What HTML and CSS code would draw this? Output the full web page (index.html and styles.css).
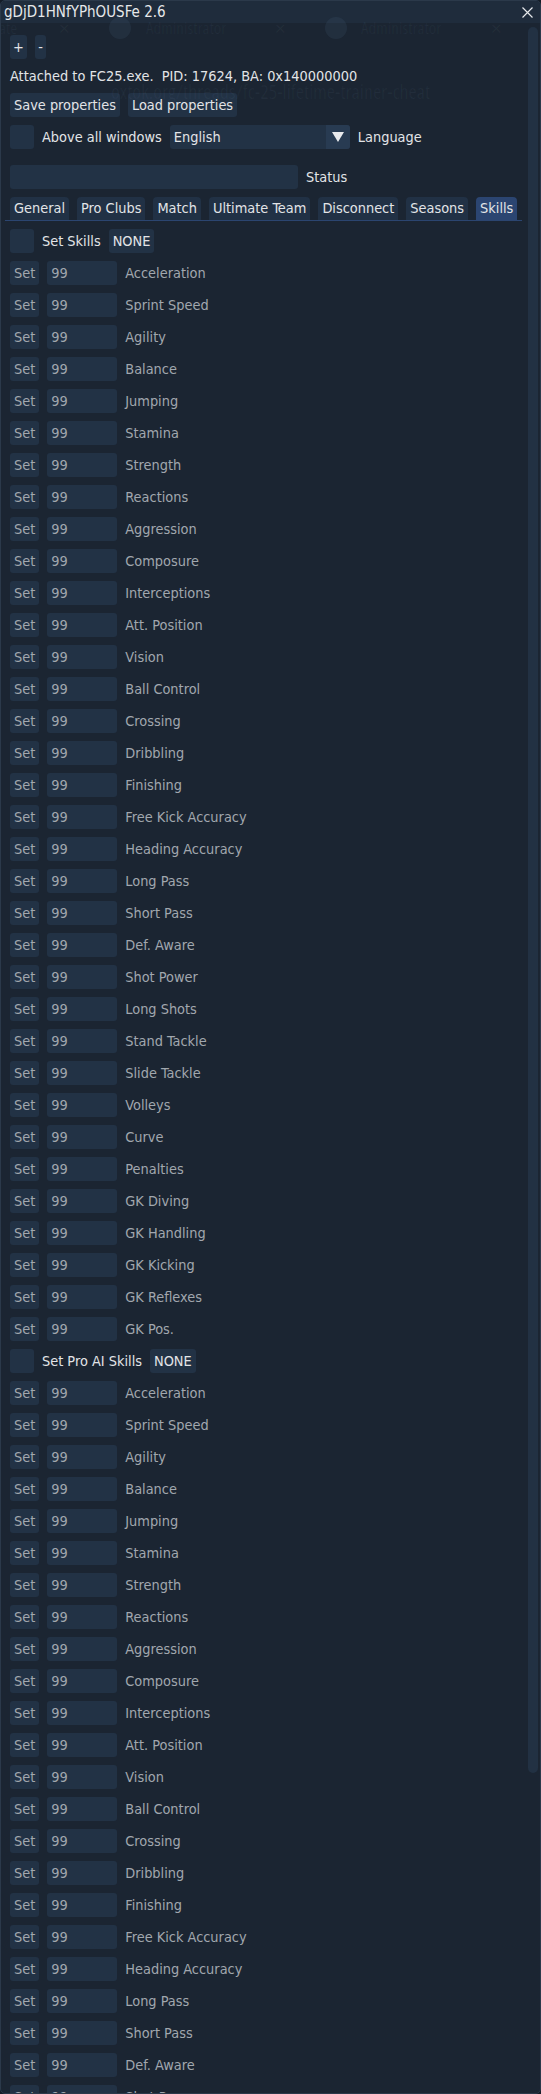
FILE: index.html
```html
<!DOCTYPE html>
<html>
<head>
<meta charset="utf-8">
<link rel="stylesheet" href="styles.css">
</head>
<body>
<div class="window">
  <div class="titlebar">
    <span class="title">gDjD1HNfYPhOUSFe 2.6</span>
    <svg class="close" width="11" height="11" viewBox="0 0 11 11"><path d="M0.5 0.5 L10.5 10.5 M10.5 0.5 L0.5 10.5" stroke="#e6e8eb" stroke-width="1.2"/></svg>
  </div>
  <div class="body">
    <div class="content">
      <div class="row">
        <span class="btn plus">+</span>
        <span class="btn minus">-</span>
      </div>
      <div class="text">Attached to FC25.exe.&nbsp; PID: 17624, BA: 0x140000000</div>
      <div class="row">
        <span class="btn">Save properties</span>
        <span class="btn">Load properties</span>
      </div>
      <div class="row">
        <span class="check"></span>
        <span class="label">Above all windows</span>
        <span class="combo"><span class="combo-text">English</span><span class="combo-arrow"><svg width="12" height="10" viewBox="0 0 12 10"><path d="M0 0 H12 L6 10 Z" fill="#e8eaed"/></svg></span></span>
        <span class="label">Language</span>
      </div>
      <div class="row status-row">
        <span class="field status"></span>
        <span class="label">Status</span>
      </div>
      <div class="tabbar">
        <span class="tab">General</span>
        <span class="tab">Pro Clubs</span>
        <span class="tab">Match</span>
        <span class="tab">Ultimate Team</span>
        <span class="tab">Disconnect</span>
        <span class="tab">Seasons</span>
        <span class="tab active">Skills</span>
      </div>
      <div class="row">
        <span class="check"></span>
        <span class="label">Set Skills</span>
        <span class="btn">NONE</span>
      </div>
      <div class="row skill"><span class="btn dim">Set</span><span class="field num">99</span><span class="name">Acceleration</span></div>
      <div class="row skill"><span class="btn dim">Set</span><span class="field num">99</span><span class="name">Sprint Speed</span></div>
      <div class="row skill"><span class="btn dim">Set</span><span class="field num">99</span><span class="name">Agility</span></div>
      <div class="row skill"><span class="btn dim">Set</span><span class="field num">99</span><span class="name">Balance</span></div>
      <div class="row skill"><span class="btn dim">Set</span><span class="field num">99</span><span class="name">Jumping</span></div>
      <div class="row skill"><span class="btn dim">Set</span><span class="field num">99</span><span class="name">Stamina</span></div>
      <div class="row skill"><span class="btn dim">Set</span><span class="field num">99</span><span class="name">Strength</span></div>
      <div class="row skill"><span class="btn dim">Set</span><span class="field num">99</span><span class="name">Reactions</span></div>
      <div class="row skill"><span class="btn dim">Set</span><span class="field num">99</span><span class="name">Aggression</span></div>
      <div class="row skill"><span class="btn dim">Set</span><span class="field num">99</span><span class="name">Composure</span></div>
      <div class="row skill"><span class="btn dim">Set</span><span class="field num">99</span><span class="name">Interceptions</span></div>
      <div class="row skill"><span class="btn dim">Set</span><span class="field num">99</span><span class="name">Att. Position</span></div>
      <div class="row skill"><span class="btn dim">Set</span><span class="field num">99</span><span class="name">Vision</span></div>
      <div class="row skill"><span class="btn dim">Set</span><span class="field num">99</span><span class="name">Ball Control</span></div>
      <div class="row skill"><span class="btn dim">Set</span><span class="field num">99</span><span class="name">Crossing</span></div>
      <div class="row skill"><span class="btn dim">Set</span><span class="field num">99</span><span class="name">Dribbling</span></div>
      <div class="row skill"><span class="btn dim">Set</span><span class="field num">99</span><span class="name">Finishing</span></div>
      <div class="row skill"><span class="btn dim">Set</span><span class="field num">99</span><span class="name">Free Kick Accuracy</span></div>
      <div class="row skill"><span class="btn dim">Set</span><span class="field num">99</span><span class="name">Heading Accuracy</span></div>
      <div class="row skill"><span class="btn dim">Set</span><span class="field num">99</span><span class="name">Long Pass</span></div>
      <div class="row skill"><span class="btn dim">Set</span><span class="field num">99</span><span class="name">Short Pass</span></div>
      <div class="row skill"><span class="btn dim">Set</span><span class="field num">99</span><span class="name">Def. Aware</span></div>
      <div class="row skill"><span class="btn dim">Set</span><span class="field num">99</span><span class="name">Shot Power</span></div>
      <div class="row skill"><span class="btn dim">Set</span><span class="field num">99</span><span class="name">Long Shots</span></div>
      <div class="row skill"><span class="btn dim">Set</span><span class="field num">99</span><span class="name">Stand Tackle</span></div>
      <div class="row skill"><span class="btn dim">Set</span><span class="field num">99</span><span class="name">Slide Tackle</span></div>
      <div class="row skill"><span class="btn dim">Set</span><span class="field num">99</span><span class="name">Volleys</span></div>
      <div class="row skill"><span class="btn dim">Set</span><span class="field num">99</span><span class="name">Curve</span></div>
      <div class="row skill"><span class="btn dim">Set</span><span class="field num">99</span><span class="name">Penalties</span></div>
      <div class="row skill"><span class="btn dim">Set</span><span class="field num">99</span><span class="name">GK Diving</span></div>
      <div class="row skill"><span class="btn dim">Set</span><span class="field num">99</span><span class="name">GK Handling</span></div>
      <div class="row skill"><span class="btn dim">Set</span><span class="field num">99</span><span class="name">GK Kicking</span></div>
      <div class="row skill"><span class="btn dim">Set</span><span class="field num">99</span><span class="name">GK Reflexes</span></div>
      <div class="row skill"><span class="btn dim">Set</span><span class="field num">99</span><span class="name">GK Pos.</span></div>
      <div class="row">
        <span class="check"></span>
        <span class="label">Set Pro AI Skills</span>
        <span class="btn">NONE</span>
      </div>
      <div class="row skill"><span class="btn dim">Set</span><span class="field num">99</span><span class="name">Acceleration</span></div>
      <div class="row skill"><span class="btn dim">Set</span><span class="field num">99</span><span class="name">Sprint Speed</span></div>
      <div class="row skill"><span class="btn dim">Set</span><span class="field num">99</span><span class="name">Agility</span></div>
      <div class="row skill"><span class="btn dim">Set</span><span class="field num">99</span><span class="name">Balance</span></div>
      <div class="row skill"><span class="btn dim">Set</span><span class="field num">99</span><span class="name">Jumping</span></div>
      <div class="row skill"><span class="btn dim">Set</span><span class="field num">99</span><span class="name">Stamina</span></div>
      <div class="row skill"><span class="btn dim">Set</span><span class="field num">99</span><span class="name">Strength</span></div>
      <div class="row skill"><span class="btn dim">Set</span><span class="field num">99</span><span class="name">Reactions</span></div>
      <div class="row skill"><span class="btn dim">Set</span><span class="field num">99</span><span class="name">Aggression</span></div>
      <div class="row skill"><span class="btn dim">Set</span><span class="field num">99</span><span class="name">Composure</span></div>
      <div class="row skill"><span class="btn dim">Set</span><span class="field num">99</span><span class="name">Interceptions</span></div>
      <div class="row skill"><span class="btn dim">Set</span><span class="field num">99</span><span class="name">Att. Position</span></div>
      <div class="row skill"><span class="btn dim">Set</span><span class="field num">99</span><span class="name">Vision</span></div>
      <div class="row skill"><span class="btn dim">Set</span><span class="field num">99</span><span class="name">Ball Control</span></div>
      <div class="row skill"><span class="btn dim">Set</span><span class="field num">99</span><span class="name">Crossing</span></div>
      <div class="row skill"><span class="btn dim">Set</span><span class="field num">99</span><span class="name">Dribbling</span></div>
      <div class="row skill"><span class="btn dim">Set</span><span class="field num">99</span><span class="name">Finishing</span></div>
      <div class="row skill"><span class="btn dim">Set</span><span class="field num">99</span><span class="name">Free Kick Accuracy</span></div>
      <div class="row skill"><span class="btn dim">Set</span><span class="field num">99</span><span class="name">Heading Accuracy</span></div>
      <div class="row skill"><span class="btn dim">Set</span><span class="field num">99</span><span class="name">Long Pass</span></div>
      <div class="row skill"><span class="btn dim">Set</span><span class="field num">99</span><span class="name">Short Pass</span></div>
      <div class="row skill"><span class="btn dim">Set</span><span class="field num">99</span><span class="name">Def. Aware</span></div>
      <div class="row skill"><span class="btn dim">Set</span><span class="field num">99</span><span class="name">Shot Power</span></div>
      <div class="row skill"><span class="btn dim">Set</span><span class="field num">99</span><span class="name">Long Shots</span></div>
    </div>
    <div class="scrollbar"><div class="thumb"></div></div>
  </div>
  <div class="ghost">
    <span class="gh-tab t0">ate</span>
    <span class="gh-x x0">✕</span>
    <span class="gh-dot d1"></span>
    <span class="gh-tab t1">Administrator</span>
    <span class="gh-x x1">✕</span>
    <span class="gh-dot d2"></span>
    <span class="gh-tab t2">Administrator</span>
    <span class="gh-x x2">✕</span>
    <span class="gh-url">oxtok.org/threads/fc-25-lifetime-trainer-cheat</span>
  </div>
</div>
</body>
</html>
```

FILE: styles.css
```css
* { box-sizing: border-box; margin: 0; padding: 0; }
html, body { background: #141c27; }
body {
  width: 541px;
  height: 2094px;
  overflow: hidden;
  font-family: "DejaVu Sans Condensed", "DejaVu Sans", sans-serif;
  font-stretch: condensed;
  font-size: 14.4px;
  color: #e2e4e7;
}
.window {
  position: relative;
  width: 541px;
  height: 2094px;
  background: #1b2532;
  border: 1px solid #2b394a;
  border-radius: 5px;
  overflow: hidden;
  display: flex;
  flex-direction: column;
}
.titlebar {
  height: 22px;
  flex: none;
  background: #1f2c3c;
  display: flex;
  align-items: center;
  justify-content: space-between;
  padding: 0 7px 0 3px;
}
.title { line-height: 22px; color: #e6e8ea; font-size: 15px; }
.close { display: block; }
.body {
  flex: 1;
  display: flex;
  min-height: 0;
}
.content {
  flex: 1;
  min-width: 0;
  padding: 12px 0 0 9px;
  display: flex;
  flex-direction: column;
  gap: 8px;
  overflow: hidden;
}
.row {
  display: flex;
  align-items: center;
  gap: 8px;
  height: 24px;
  flex: none;
}
.text { height: 18px; line-height: 18px; flex: none; }
.btn {
  height: 24px;
  line-height: 24px;
  padding: 0 4px;
  background: #223245;
  border-radius: 3px;
  white-space: nowrap;
}
.plus { width: 17px; text-align: center; padding: 0; }
.minus { width: 11px; text-align: center; padding: 0; }
.check {
  width: 24px;
  height: 24px;
  background: #223245;
  border-radius: 3px;
}
.label { white-space: nowrap; }
.combo {
  display: flex;
  width: 180px;
  height: 24px;
  background: #223245;
  border-radius: 3px;
  overflow: hidden;
}
.combo-text { flex: 1; line-height: 24px; padding: 0 4px; }
.combo-arrow {
  width: 24px;
  background: #283b52;
  display: flex;
  align-items: center;
  justify-content: center;
}
.combo-arrow svg { display: block; }
.field {
  height: 24px;
  background: #223245;
  border-radius: 3px;
}
.status-row { margin-top: 8px; }
.status { width: 288px; }
.tabbar {
  display: flex;
  gap: 8px;
  margin-left: -5px;
  width: 517px;
  padding-left: 5px;
  height: 24px;
  flex: none;
  align-items: flex-end;
  border-bottom: 1px solid #2b4570;
}
.tab {
  height: 23px;
  line-height: 23px;
  padding: 0 4px;
  background: #213145;
  border-radius: 4px 4px 0 0;
}
.tab.active { background: #2b4571; }
.skill { color: #a1a7ae; }
.btn.dim { color: #a1a7ae; }
.num { width: 70px; line-height: 24px; padding: 0 4px; }
.name { white-space: nowrap; }
.scrollbar {
  width: 14px;
  flex: none;
  padding: 4px 2px 0 2px;
}
.thumb {
  width: 10px;
  height: 1746px;
  background: #223143;
  border-radius: 5px;
}
.ghost {
  position: absolute;
  left: 0;
  top: 0;
  width: 100%;
  height: 110px;
  pointer-events: none;
  font-family: "Open Sans", sans-serif;
  color: rgba(150, 170, 200, 0.06);
}
.gh-tab { position: absolute; top: 17px; font-size: 17px; line-height: 20px; }
.t0 { left: -2px; }
.t1 { left: 145px; }
.t2 { left: 360px; }
.gh-x { position: absolute; top: 17px; font-size: 15px; line-height: 20px; }
.x0 { left: 57px; }
.x1 { left: 273px; }
.x2 { left: 489px; }
.gh-dot {
  position: absolute;
  top: 16px;
  width: 22px;
  height: 22px;
  border-radius: 50%;
  background: rgba(90, 120, 160, 0.12);
}
.d1 { left: 108px; }
.d2 { left: 324px; }
.gh-url {
  position: absolute;
  left: 110px;
  top: 79px;
  font-size: 20px;
  line-height: 24px;
  white-space: nowrap;
}
```
